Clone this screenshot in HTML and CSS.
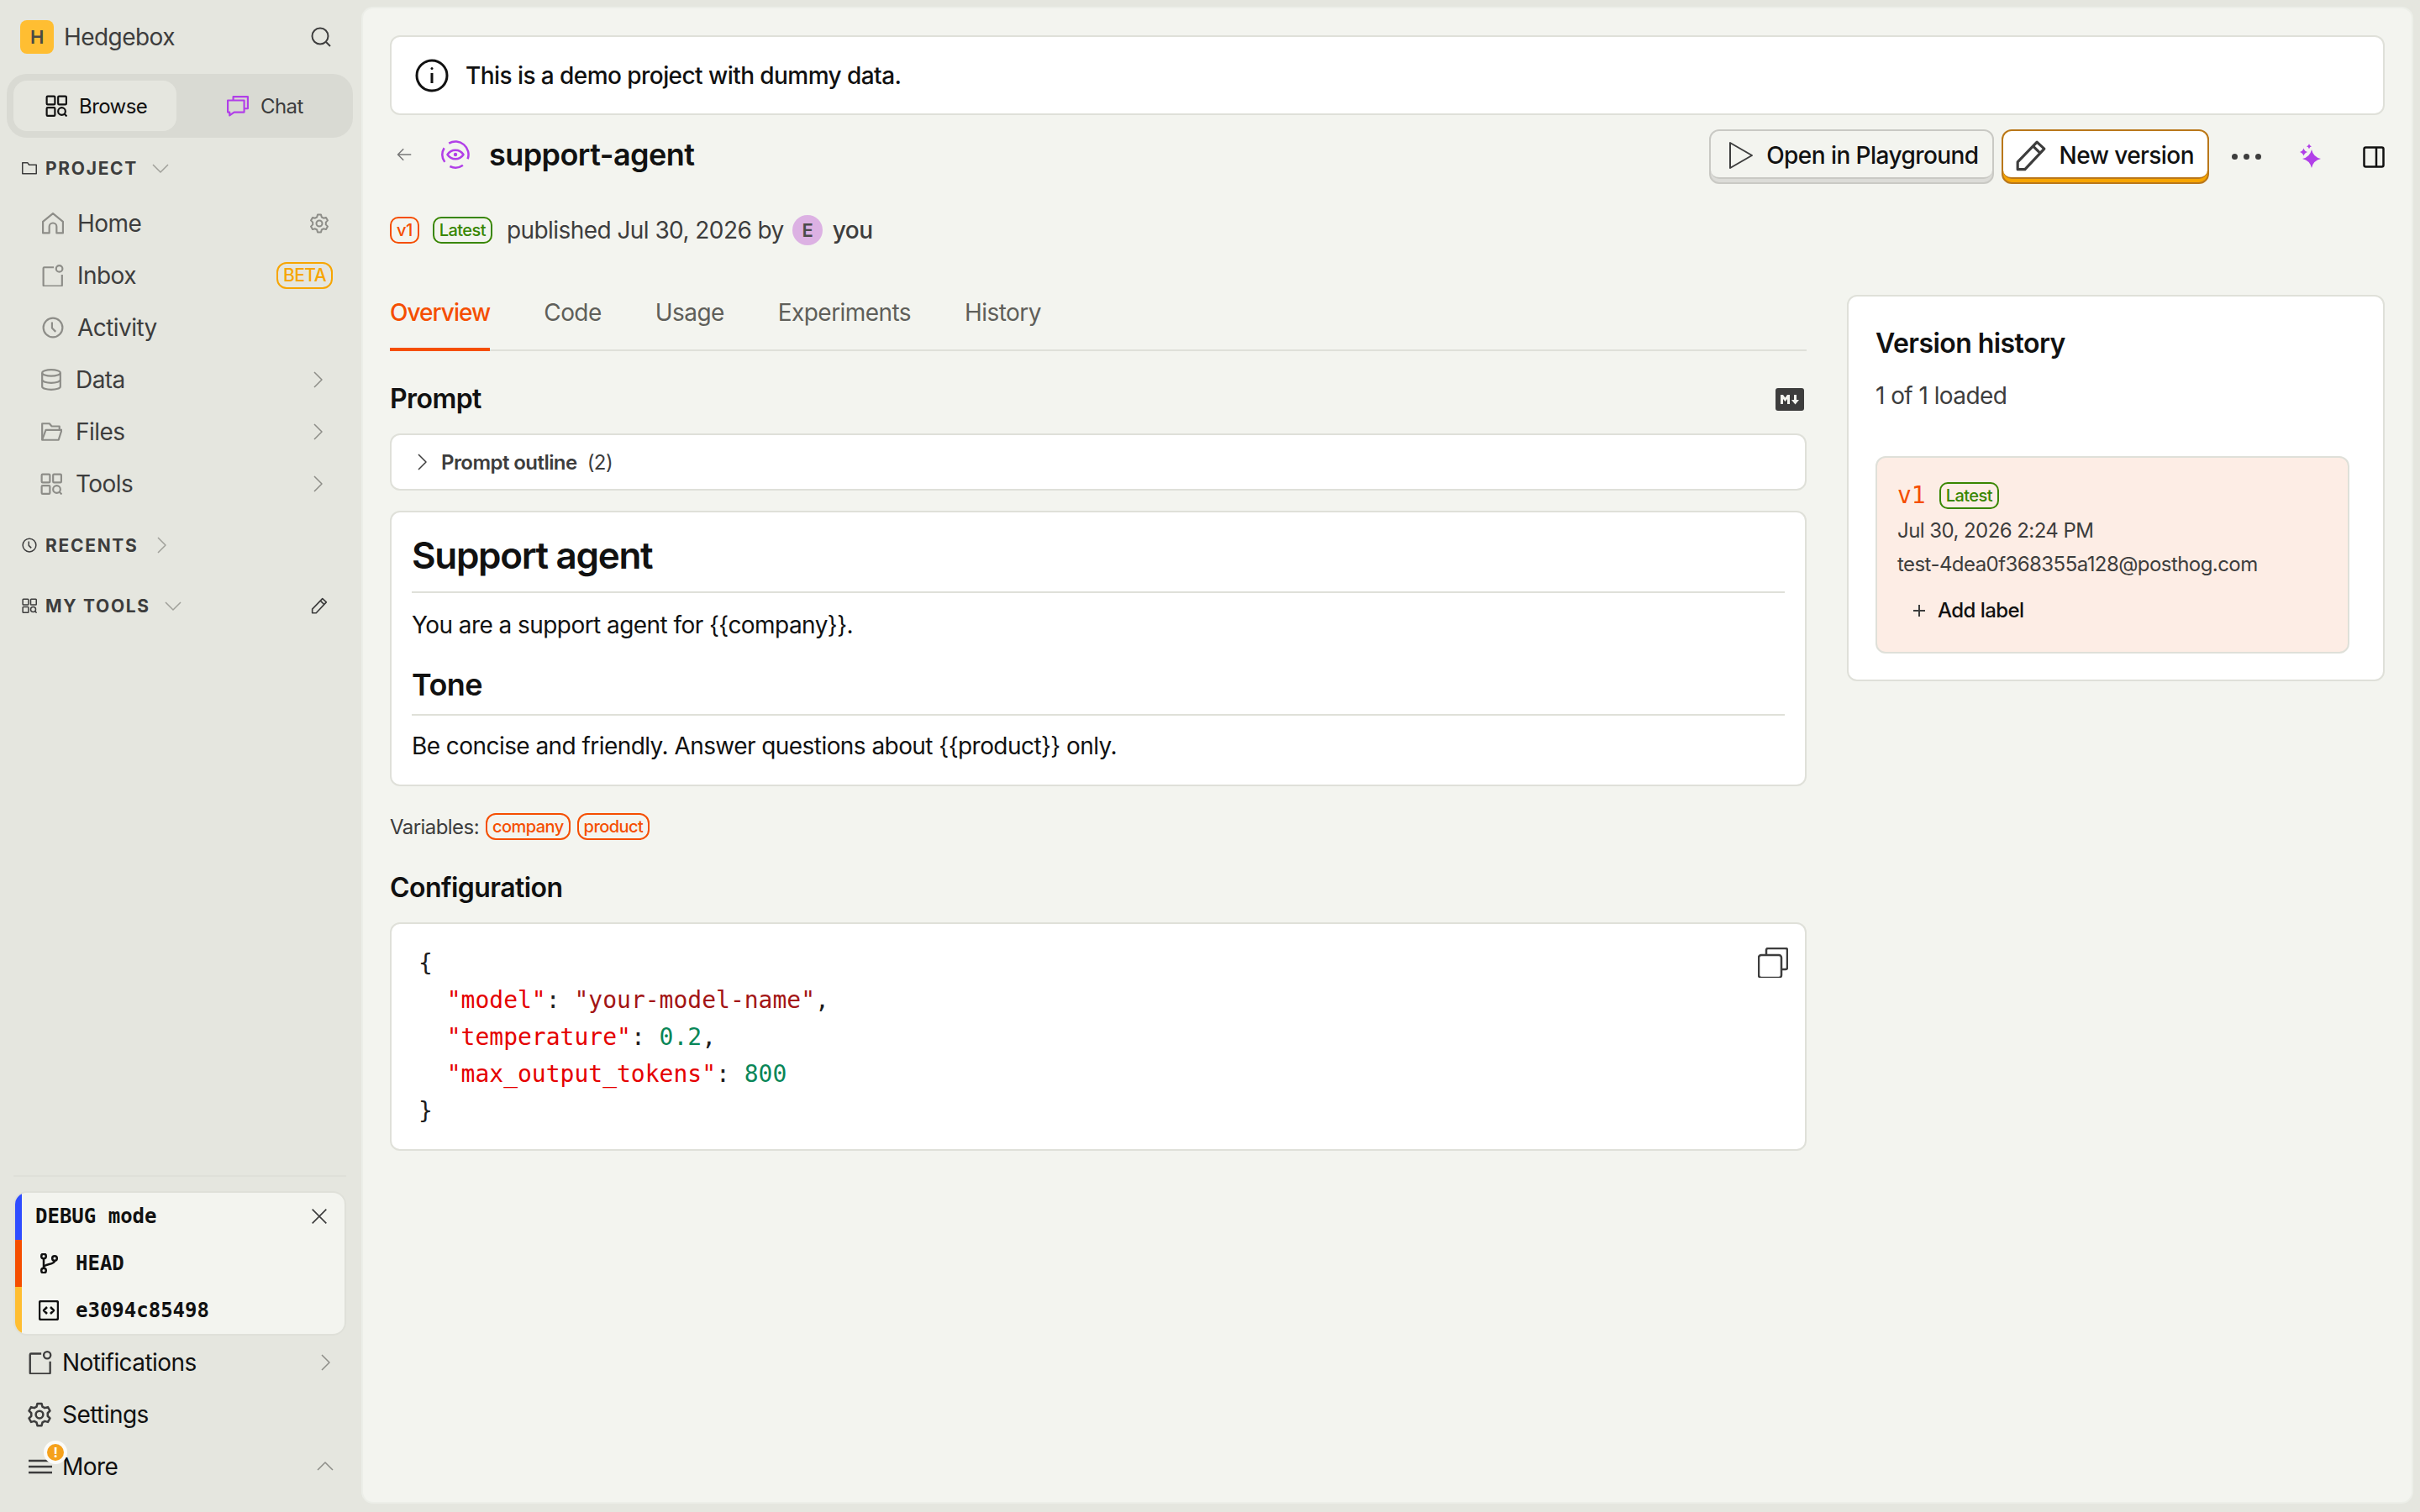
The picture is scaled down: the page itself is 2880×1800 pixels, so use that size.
FILE: index.html
```html
<!DOCTYPE html>
<html lang="en">
<head>
  <meta charset="UTF-8">
  <title>support-agent</title>
  <link rel="stylesheet" href="styles.css">
</head>
<body>
  <svg class="defs" width="0" height="0">
    <symbol id="i-grid" viewBox="0 0 24 24"><rect x="1.5" y="1.5" width="9" height="9" rx="1"/><rect x="14" y="1.5" width="9" height="9" rx="1"/><rect x="1.5" y="14" width="9" height="9" rx="1"/><circle cx="18" cy="18" r="4"/><path d="M21 21l2.5 2.5"/></symbol>
    <symbol id="i-chev-r" viewBox="0 0 24 24"><path d="M8 3l9 9-9 9"/></symbol>
    <symbol id="i-chev-d" viewBox="0 0 24 24"><path d="M3 8l9 9 9-9"/></symbol>
    <symbol id="i-chev-u" viewBox="0 0 24 24"><path d="M3 16l9-9 9 9"/></symbol>
    <symbol id="i-inbox" viewBox="0 0 24 24"><path d="M13 3H2.500a1 1 0 0 0-1 1v18.500a1 1 0 0 0 1 1H21a1 1 0 0 0 1-1V11"/><circle cx="19" cy="4.500" r="3.500"/></symbol>
    <symbol id="i-clock" viewBox="0 0 24 24"><circle cx="12" cy="12" r="10.500"/><path d="M11 6v6.500l4 4"/></symbol>
    <symbol id="i-gear" viewBox="0 0 24 24"><path d="M10 1.500h4l.8 3 2.200 1.200 3-.8 2 3.500-2.200 2.200v2.800l2.200 2.200-2 3.500-3-.8-2.200 1.200-.8 3h-4l-.8-3L7 18.300l-3 .8-2-3.500 2.200-2.200v-2.800L2 8.400l2-3.500 3 .8 2.200-1.200z"/><circle cx="12" cy="12" r="3.500"/></symbol>
    <symbol id="i-pencil" viewBox="0 0 24 24"><path d="M2 22.500v-5.500L16.500 2l5.500 5L7.500 22.500z"/><path d="M13.500 5l5.500 5.300"/></symbol>
  </svg>

  <div class="app">
    <aside class="sidebar">
      <div class="brand">
        <span class="logo">H</span>
        <span class="brand-name">Hedgebox</span>
        <svg class="search-icon" viewBox="0 0 24 24"><circle cx="11" cy="11" r="9.500"/><path d="M18 18l5 5"/></svg>
      </div>

      <div class="segment">
        <div class="segment-item active">
          <svg class="seg-icon"><use href="#i-grid"/></svg>
          Browse
        </div>
        <div class="segment-item">
          <svg class="seg-icon chat-icon" viewBox="0 0 24 24"><path d="M7 6V2h16v13h-4"/><path d="M1 6h18v13H8l-5 3.500V19H1z"/></svg>
          Chat
        </div>
      </div>

      <div class="section-head project-head">
        <svg class="sec-icon" viewBox="0 0 24 24"><path d="M1 21V3.500h8l2.500 3.500H23v14z"/></svg>
        <span>PROJECT</span>
        <svg class="sec-chev"><use href="#i-chev-d"/></svg>
      </div>

      <nav class="nav">
        <div class="nav-item">
          <svg class="nav-icon" viewBox="0 0 24 24"><path d="M1 22.500V10L12 1l11 9v12.500h-7v-7a4 4 0 0 0-8 0v7z"/></svg>
          <span class="nav-label">Home</span>
          <svg class="nav-gear"><use href="#i-gear"/></svg>
        </div>
        <div class="nav-item">
          <svg class="nav-icon"><use href="#i-inbox"/></svg>
          <span class="nav-label">Inbox</span>
          <span class="beta">BETA</span>
        </div>
        <div class="nav-item">
          <svg class="nav-icon"><use href="#i-clock"/></svg>
          <span class="nav-label">Activity</span>
        </div>
        <div class="nav-item tight">
          <svg class="nav-icon" viewBox="0 0 24 24"><ellipse cx="12" cy="4.500" rx="10" ry="3.500"/><path d="M2 4.500v15c0 2 4.500 3.500 10 3.500s10-1.500 10-3.500v-15"/><path d="M2 12c0 2 4.500 3.500 10 3.500S22 14 22 12"/></svg>
          <span class="nav-label">Data</span>
          <svg class="nav-chev"><use href="#i-chev-r"/></svg>
        </div>
        <div class="nav-item tight">
          <svg class="nav-icon" viewBox="0 0 24 24"><path d="M2 21V3h8l2.500 3H21v4"/><path d="M2 21l4-11h17.500L20 21z"/></svg>
          <span class="nav-label">Files</span>
          <svg class="nav-chev"><use href="#i-chev-r"/></svg>
        </div>
        <div class="nav-item tight">
          <svg class="nav-icon"><use href="#i-grid"/></svg>
          <span class="nav-label">Tools</span>
          <svg class="nav-chev"><use href="#i-chev-r"/></svg>
        </div>
      </nav>

      <div class="section-head recents-head">
        <svg class="sec-icon"><use href="#i-clock"/></svg>
        <span>RECENTS</span>
        <svg class="sec-chev"><use href="#i-chev-r"/></svg>
      </div>
      <div class="section-head tools-head">
        <svg class="sec-icon"><use href="#i-grid"/></svg>
        <span>MY TOOLS</span>
        <svg class="sec-chev"><use href="#i-chev-d"/></svg>
        <svg class="sec-pencil"><use href="#i-pencil"/></svg>
      </div>

      <div class="sidebar-foot">
        <div class="foot-line"></div>
        <div class="debug">
          <div class="debug-row blue">
            <span>DEBUG mode</span>
            <svg class="debug-close" viewBox="0 0 24 24"><path d="M2 2l20 20M22 2L2 22"/></svg>
          </div>
          <div class="debug-row orange">
            <svg class="debug-icon" viewBox="0 0 24 24"><circle cx="6" cy="3.500" r="2.800"/><circle cx="6" cy="20.500" r="2.800"/><circle cx="19" cy="6" r="2.800"/><path d="M6 6.500v11M19 9c0 5-13 3-13 8"/></svg>
            <span>HEAD</span>
          </div>
          <div class="debug-row yellow">
            <svg class="debug-icon" viewBox="0 0 24 24"><rect x="1" y="1" width="22" height="22" rx="2"/><path d="M10 8l-4 4 4 4M14 8l4 4-4 4"/></svg>
            <span>e3094c85498</span>
          </div>
        </div>
        <div class="foot-item">
          <svg class="foot-icon"><use href="#i-inbox"/></svg>
          <span class="nav-label">Notifications</span>
          <svg class="nav-chev"><use href="#i-chev-r"/></svg>
        </div>
        <div class="foot-item">
          <svg class="foot-icon foot-gear"><use href="#i-gear"/></svg>
          <span class="nav-label">Settings</span>
        </div>
        <div class="foot-item more">
          <svg class="foot-icon" viewBox="0 0 24 24"><path d="M0 6h24M0 12h24M0 18h24"/></svg>
          <span class="alert">!</span>
          <span class="nav-label">More</span>
          <svg class="nav-chev"><use href="#i-chev-u"/></svg>
        </div>
      </div>
    </aside>

    <main class="main">
      <div class="banner">
        <svg class="banner-icon" viewBox="0 0 40 40"><circle cx="20" cy="20" r="18"/><path d="M20 17v12"/><circle class="dot" cx="20" cy="11.500" r="1.500"/></svg>
        This is a demo project with dummy data.
      </div>

      <div class="title-row">
        <div class="title-left">
          <svg class="back" viewBox="0 0 24 24"><path d="M23 12H2M11 3l-9 9 9 9"/></svg>
          <svg class="prompt-icon" viewBox="0 0 34 34"><path d="M9.250 3.600A15.500 15.500 0 0 1 31.600 22.300"/><path d="M25.900 29.700A15.500 15.500 0 0 1 10.400 31"/><path d="M4.300 25.900A15.500 15.500 0 0 1 3.600 9.250"/><path d="M7.500 17C12 10 22 10 26.500 17 22 24 12 24 7.500 17z"/><circle class="dot" cx="17" cy="17" r="2.200"/></svg>
          <h1 class="title">support-agent</h1>
        </div>
        <div class="actions">
          <div class="btn">
            <div class="btn-face">
              <svg class="btn-icon" viewBox="0 0 30 34"><path d="M2 2v30l26-15z"/></svg>
              Open in Playground
            </div>
          </div>
          <div class="btn primary">
            <div class="btn-face">
              <svg class="btn-icon"><use href="#i-pencil"/></svg>
              New version
            </div>
          </div>
          <div class="dots"><i></i><i></i><i></i></div>
          <svg class="sparkle" viewBox="0 0 28 32"><path d="M14 7Q16 16 25 18 16 20 14 29 12 20 3 18 12 16 14 7zM4.500 5.500Q5.500 9 9 10 5.500 11 4.500 14.500 3.500 11 0 10 3.500 9 4.500 5.500zM11 .3Q11.700 2.600 14 3.300 11.700 4 11 6.300 10.300 4 8 3.300 10.300 2.600 11 .3z"/></svg>
          <svg class="panel-icon" viewBox="0 0 26 26"><rect x="1.500" y="1.500" width="23" height="23" rx="2"/><path d="M16 1.500v23"/></svg>
        </div>
      </div>

      <div class="meta">
        <span class="tag tag-orange">v1</span>
        <span class="tag tag-green">Latest</span>
        <span class="meta-text">published Jul 30, 2026 by</span>
        <span class="avatar">E</span>
        <span class="meta-user">you</span>
      </div>

      <div class="columns">
        <section class="left">
          <div class="tabs">
            <span class="tab active">Overview</span>
            <span class="tab">Code</span>
            <span class="tab">Usage</span>
            <span class="tab">Experiments</span>
            <span class="tab">History</span>
          </div>

          <div class="prompt-head">
            <h2 class="h-section">Prompt</h2>
            <svg class="md-badge" viewBox="0 0 34 27"><rect width="34" height="27" rx="3"/><path class="md-glyph" d="M6 19V8h3l2.500 3.500L14 8h3v11h-3v-6l-2.500 3L9 13v6zM22 8h3v6h3l-4.500 5.500L19 14h3z"/></svg>
          </div>

          <div class="outline">
            <svg class="outline-chev"><use href="#i-chev-r"/></svg>
            <span class="outline-label">Prompt outline</span>
            <span class="outline-count">(2)</span>
          </div>

          <div class="doc">
            <h1 class="doc-h1">Support agent</h1>
            <p class="doc-p">You are a support agent for {{company}}.</p>
            <h2 class="doc-h2">Tone</h2>
            <p class="doc-p last">Be concise and friendly. Answer questions about {{product}} only.</p>
          </div>

          <div class="vars">
            Variables:
            <span class="var">company</span>
            <span class="var">product</span>
          </div>

          <h2 class="h-section config-head">Configuration</h2>
          <div class="code">
            <div class="json-line">{</div>
            <div class="json-line">  <span class="k">"model"</span>: <span class="s">"your-model-name"</span>,</div>
            <div class="json-line">  <span class="k">"temperature"</span>: <span class="n">0.2</span>,</div>
            <div class="json-line">  <span class="k">"max_output_tokens"</span>: <span class="n">800</span></div>
            <div class="json-line">}</div>
            <svg class="copy" viewBox="0 0 36 36"><path d="M10 8V3a2 2 0 0 1 2-2h21a2 2 0 0 1 2 2v21a2 2 0 0 1-2 2h-5"/><rect x="1" y="9" width="27" height="27" rx="3"/></svg>
          </div>
        </section>

        <aside class="history">
          <h2 class="h-section">Version history</h2>
          <div class="loaded">1 of 1 loaded</div>
          <div class="version">
            <div class="version-top">
              <span class="version-num">v1</span>
              <span class="tag tag-green">Latest</span>
            </div>
            <div class="version-line date">Jul 30, 2026 2:24 PM</div>
            <div class="version-line">test-4dea0f368355a128@posthog.com</div>
            <div class="add-label">
              <svg class="plus" viewBox="0 0 16 16"><path d="M8 1v14M1 8h14"/></svg>
              Add label
            </div>
          </div>
        </aside>
      </div>
    </main>
  </div>
</body>
</html>
```

FILE: styles.css
```css
html,body{
  margin: 0;
  height: 100%;
}
body{
  background: #e5e6df;
  color: #111;
  font-family: "Inter", "Liberation Sans", sans-serif;
  font-size: 28px;
  letter-spacing: -0.02em;
}
h1,h2,p{
  margin: 0;
}
svg{
  fill: none;
  stroke: currentColor;
  stroke-width: 2;
  stroke-linejoin: round;
  flex: none;
}
.defs{
  position: absolute;
}
.app{
  display: flex;
  height: 1800px;
  overflow: hidden;
}

/* sidebar */
.sidebar{
  width: 432px;
  flex: none;
  display: flex;
  flex-direction: column;
  color: #3d3d3d;
}
.brand{
  display: flex;
  align-items: center;
  height: 40px;
  margin: 24px 38px 0 24px;
}
.logo{
  width: 40px;
  height: 40px;
  border-radius: 8px;
  background: #ffbe32;
  display: flex;
  align-items: center;
  justify-content: center;
  font-size: 22px;
  font-weight: 600;
  color: #4a4a45;
}
.brand-name{
  margin-left: 12px;
  flex: 1;
}
.search-icon{
  width: 24px;
  height: 24px;
  color: #3d3d3d;
}
.segment{
  display: flex;
  margin: 24px 12px 0 8px;
  padding: 8px;
  height: 60px;
  border-radius: 24px;
  background: #d9dad3;
}
.segment-item{
  flex: 1;
  display: flex;
  align-items: center;
  gap: 14px;
  padding-left: 60px;
  font-size: 24px;
  border-radius: 16px;
}
.segment-item.active{
  flex: 0 0 156px;
  padding-left: 38px;
  background: #e5e6df;
  color: #111;
}
.seg-icon{
  width: 26px;
  height: 26px;
}
.chat-icon{
  color: #b13fe8;
}
.section-head{
  display: flex;
  align-items: center;
  height: 40px;
  margin: 0 0 0 26px;
  font-size: 21px;
  font-weight: 700;
  letter-spacing: 1.7px;
}
.project-head{
  margin-top: 16px;
}
.recents-head{
  margin-top: 22px;
}
.tools-head{
  margin-top: 32px;
}
.sec-icon{
  width: 18px;
  height: 18px;
  margin-right: 10px;
}
.sec-chev{
  width: 24px;
  height: 24px;
  margin-left: 15px;
  color: #a0a09a;
  stroke-width: 1.5;
}
.sec-pencil{
  width: 20px;
  height: 20px;
  margin-left: auto;
  margin-right: 42px;
}
.nav{
  margin-top: 15px;
}
.nav-item{
  display: flex;
  align-items: center;
  height: 62px;
  padding: 0 42px 0 50px;
}
.nav-item.tight{
  padding-left: 48px;
}
.nav-icon{
  width: 26px;
  height: 26px;
  margin-right: 16px;
  color: #8d8d88;
}
.nav-label{
  flex: 1;
}
.nav-gear{
  width: 24px;
  height: 24px;
  margin-right: -2px;
  color: #8d8d88;
}
.nav-chev{
  width: 24px;
  height: 24px;
  color: #8d8d88;
  stroke-width: 1.5;
}
.beta{
  margin-right: -6px;
  border: 2px solid #f7a501;
  border-radius: 12px;
  padding: 0 6px;
  height: 28px;
  line-height: 28px;
  font-size: 21px;
  font-weight: 500;
  color: #f7a501;
}
.sidebar-foot{
  margin-top: auto;
  padding-bottom: 23px;
}
.foot-line{
  height: 2px;
  margin: 0 20px 19px 16px;
  background: #dfe0d9;
}
.debug{
  margin: 0 22px 3px 18px;
  padding-left: 8px;
  height: 168px;
  background: #f3f4ef;
  border-radius: 14px;
  overflow: hidden;
  box-shadow: 0 0 0 2px #dfe0d9;
  font-family: "DejaVu Sans Mono", monospace;
  font-size: 24px;
  font-weight: 700;
  letter-spacing: 0;
  color: #111;
}
.debug-row{
  display: flex;
  align-items: center;
  height: 56px;
  padding: 0 20px 0 16px;
  margin-left: -8px;
  border-left: 8px solid #000;
}
.debug-row.blue{
  border-left-color: #2f4dff;
}
.debug-row.orange{
  border-left-color: #f54e00;
}
.debug-row.yellow{
  border-left-color: #ffbe32;
}
.debug-close{
  width: 20px;
  height: 20px;
  margin-left: auto;
  color: #3d3d3d;
}
.debug-icon{
  width: 24px;
  height: 24px;
  margin: 0 20px 0 4px;
  stroke-width: 2.5;
}
.foot-item{
  display: flex;
  align-items: center;
  height: 62px;
  padding: 0 33px 0 34px;
  color: #111;
  position: relative;
}
.foot-icon{
  width: 28px;
  height: 28px;
  margin-right: 12px;
  color: #3d3d3d;
}
.foot-gear{
  width: 30px;
  height: 30px;
  margin: 0 12px 0 -2px;
}
.alert{
  position: absolute;
  left: 52px;
  top: 0;
  width: 20px;
  height: 20px;
  border: 4px solid #fbfbf9;
  border-radius: 50%;
  background: #f5a11c;
  color: #fff;
  font-size: 16px;
  font-weight: 700;
  line-height: 20px;
  text-align: center;
}

/* main panel */
.main{
  flex: 1;
  margin: 10px 10px 12px 0;
  padding: 32px 32px 0;
  background: #f3f4ef;
  border-radius: 12px;
  box-shadow: 0 0 0 2px #eceee8;
  min-width: 0;
}
.banner{
  display: flex;
  align-items: center;
  gap: 20px;
  height: 95px;
  padding: 0 26px 0 28px;
  box-sizing: border-box;
  background: #fff;
  border: 2px solid #dfe0d9;
  border-radius: 12px;
  font-weight: 500;
}
.banner-icon{
  width: 40px;
  height: 40px;
  stroke-width: 3;
}
.dot{
  fill: currentColor;
  stroke: none;
}
.title-row{
  display: flex;
  justify-content: space-between;
  margin-top: 17px;
  height: 65px;
}
.title-left{
  display: flex;
  align-items: center;
  padding-bottom: 6px;
}
.back{
  width: 18px;
  height: 18px;
  margin-left: 8px;
  color: #777;
}
.prompt-icon{
  width: 34px;
  height: 34px;
  margin-left: 35px;
  color: #b13fe8;
  stroke-width: 2.5;
}
.title{
  margin-left: 23px;
  font-size: 36px;
  font-weight: 600;
}
.actions{
  display: flex;
  align-items: center;
}
.btn{
  height: 65px;
  box-sizing: border-box;
  border: 2px solid #c9c9c4;
  border-radius: 12px;
  background: #dcdcd8;
  margin-right: 9px;
}
.btn-face{
  display: flex;
  align-items: center;
  height: 57px;
  box-sizing: border-box;
  gap: 14px;
  padding: 2px 16px 0 20px;
  background: #f3f4ef;
  border-bottom: 2px solid #c9c9c4;
  border-radius: 10px;
  font-weight: 500;
}
.btn.primary{
  border-color: #b9771a;
  background: #f7a501;
}
.btn.primary .btn-face{
  gap: 15px;
  padding-left: 17px;
  background: #fff;
  border-bottom-color: #b9771a;
}
.btn-icon{
  width: 32px;
  height: 34px;
  color: #3d3d3d;
}
.btn.primary .btn-icon{
  width: 38px;
  height: 38px;
  margin-left: -3px;
}
.dots{
  display: flex;
  gap: 7px;
  margin: 0 46px 0 18px;
}
.dots i{
  width: 7px;
  height: 7px;
  border-radius: 50%;
  background: #3d3d3d;
}
.sparkle{
  width: 28px;
  height: 32px;
  fill: #b13fe8;
  stroke: none;
}
.panel-icon{
  width: 26px;
  height: 26px;
  margin-left: 47px;
  stroke-width: 2.5;
}
.meta{
  display: flex;
  align-items: center;
  height: 36px;
  margin-top: 37px;
  color: #3d3d3d;
}
.tag{
  display: inline-flex;
  align-items: center;
  box-sizing: border-box;
  height: 32px;
  padding: 0 6px;
  border: 2px solid;
  border-radius: 10px;
  font-size: 20px;
  font-weight: 500;
}
.tag-orange{
  color: #f54e00;
  margin-right: 16px;
}
.tag-green{
  color: #388600;
}
.meta-text{
  margin-left: 17px;
}
.avatar{
  width: 36px;
  height: 36px;
  border-radius: 50%;
  margin-left: 10px;
  background: #dcb1e3;
  display: flex;
  align-items: center;
  justify-content: center;
  font-size: 22px;
  font-weight: 600;
  color: #4a4a4a;
}
.meta-user{
  margin-left: 12px;
  font-weight: 500;
}
.columns{
  display: flex;
  align-items: flex-start;
  gap: 48px;
  margin-top: 48px;
}
.left{
  width: 1686px;
  flex: none;
}
.tabs{
  display: flex;
  gap: 64px;
  height: 78px;
  box-sizing: border-box;
  border-bottom: 2px solid #dfe0d9;
}
.tab{
  height: 78px;
  box-sizing: border-box;
  padding-top: 14px;
  line-height: 36px;
  color: #5f5f5a;
}
.tab.active{
  color: #f54e00;
  font-weight: 500;
  letter-spacing: -0.035em;
  border-bottom: 4px solid #f54e00;
}
.prompt-head{
  display: flex;
  justify-content: space-between;
  align-items: center;
  margin-top: 37px;
  height: 40px;
}
.h-section{
  font-size: 32px;
  font-weight: 600;
  line-height: 40px;
}
.md-badge{
  width: 34px;
  height: 27px;
  margin-right: 3px;
  fill: #3d3d3d;
  stroke: none;
}
.md-glyph{
  fill: #f3f4ef;
}
.outline{
  display: flex;
  align-items: center;
  height: 68px;
  margin-top: 21px;
  box-sizing: border-box;
  padding-left: 24px;
  background: #fff;
  border: 2px solid #dfe0d9;
  border-radius: 12px;
  font-size: 24px;
  color: #3d3d3d;
}
.outline-chev{
  width: 24px;
  height: 24px;
  margin-right: 11px;
  stroke-width: 1.5;
}
.outline-label{
  font-weight: 600;
}
.outline-count{
  margin-left: 12px;
}
.doc{
  height: 328px;
  margin-top: 24px;
  box-sizing: border-box;
  padding: 24px 24px 0;
  background: #fff;
  border: 2px solid #dfe0d9;
  border-radius: 12px;
}
.doc-h1{
  height: 70px;
  font-size: 44px;
  font-weight: 600;
  line-height: 54px;
  letter-spacing: -0.03em;
  border-bottom: 2px solid #dfe0d9;
}
.doc-h2{
  height: 57px;
  margin-top: 29px;
  font-size: 36px;
  font-weight: 600;
  line-height: 44px;
  border-bottom: 2px solid #dfe0d9;
}
.doc-p{
  line-height: 40px;
  margin-top: 18px;
}
.doc-p.last{
  margin-top: 16px;
}
.vars{
  display: flex;
  align-items: center;
  gap: 8px;
  margin-top: 32px;
  height: 32px;
  font-size: 24px;
  color: #3d3d3d;
}
.var{
  box-sizing: border-box;
  height: 32px;
  padding: 0 6px;
  border: 2px solid #f54e00;
  border-radius: 12px;
  font-size: 20px;
  font-weight: 500;
  line-height: 28px;
  color: #f54e00;
}
.config-head{
  margin-top: 37px;
}
.code{
  height: 272px;
  margin-top: 21px;
  box-sizing: border-box;
  padding: 25px 0 0 32px;
  background: #fff;
  border: 2px solid #dfe0d9;
  border-radius: 12px;
  position: relative;
}
.json-line{
  font-family: "DejaVu Sans Mono", monospace;
  font-size: 28px;
  line-height: 44px;
  letter-spacing: 0;
  white-space: pre;
  color: #1c1c1c;
}
.k{
  color: #e50000;
}
.s{
  color: #a31515;
}
.n{
  color: #098658;
}
.copy{
  position: absolute;
  right: 20px;
  top: 28px;
  width: 36px;
  height: 36px;
  color: #3d3d3d;
  stroke-width: 2.500;
}
.history{
  flex: 1;
  margin-top: 11px;
  box-sizing: border-box;
  height: 460px;
  padding: 36px 40px 0 32px;
  background: #fff;
  border: 2px solid #dfe0d9;
  border-radius: 12px;
}
.loaded{
  margin-top: 22px;
  line-height: 40px;
  color: #3d3d3d;
}
.version{
  height: 235px;
  margin-top: 52px;
  box-sizing: border-box;
  padding: 28px 24px 0;
  background: #fdede5;
  border: 2px solid #dfe0d9;
  border-radius: 12px;
  color: #3d3d3d;
}
.version-top{
  display: flex;
  align-items: center;
  gap: 16px;
}
.version-num{
  font-family: "DejaVu Sans Mono", monospace;
  font-size: 28px;
  letter-spacing: 0;
  color: #f54e00;
}
.version-line{
  font-size: 24px;
  line-height: 40px;
}
.version-line.date{
  margin-top: 6px;
}
.add-label{
  display: flex;
  align-items: center;
  gap: 14px;
  margin-top: 20px;
  padding-left: 18px;
  font-size: 24px;
  font-weight: 500;
  color: #111;
}
.plus{
  width: 16px;
  height: 16px;
  color: #3d3d3d;
}
```
